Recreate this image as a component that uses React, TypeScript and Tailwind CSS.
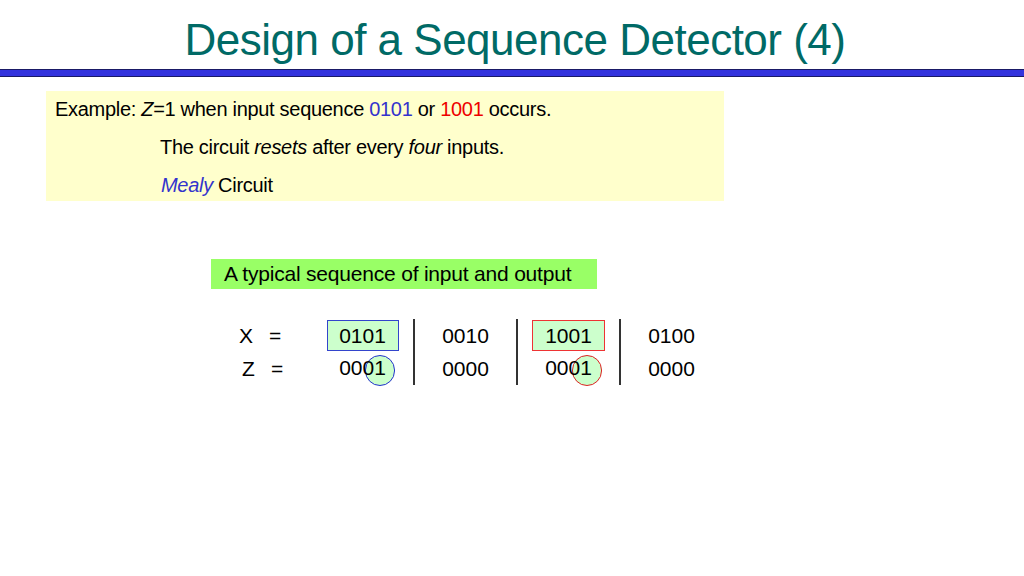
export default function App() {
  const f = { fontFamily: '"Liberation Sans", Arial, sans-serif' };
  const col = "w-[101px] flex flex-col items-center";
  return (
    <div style={f} className="w-[1024px] h-[576px] bg-white relative overflow-hidden text-black">
      <div className="h-[69px] flex items-start justify-center pt-[14px]">
        <h1 className="text-[44px] leading-[52px] text-[#006a66] tracking-[-0.5px] ml-[6px]">Design of a Sequence Detector (4)</h1>
      </div>
      <div className="h-[8px] bg-[#3333dd] border-y border-[#1a1a66]" />
      <div className="ml-[46px] mt-[14px] w-[678px] h-[110px] bg-[#ffffcc] text-[20px] leading-[22px] pt-[7px] pl-[9px] tracking-[-0.3px]">
        <div>Example: <i>Z</i>=1 when input sequence <span className="text-[#3333cc]">0101</span> or <span className="text-[#ee0000]">1001</span> occurs.</div>
        <div className="ml-[105px] mt-[16px]">The circuit <i>resets</i> after every <i>four</i> inputs.</div>
        <div className="ml-[106px] mt-[16px]"><i className="text-[#3333cc]">Mealy</i> Circuit</div>
      </div>
      <div className="ml-[211px] mt-[58px] w-[386px] h-[30px] bg-[#99ff66] text-[21px] leading-[30px] pl-[13px] tracking-[-0.2px]">A typical sequence of input and output</div>
      <div className="ml-[232px] mt-[30px] flex text-[21px]">
        <div className="w-[80px] flex flex-col">
          <div className="h-[33px] flex items-center"><span className="w-[37px] pl-[7px]">X</span><span>=</span></div>
          <div className="h-[33px] flex items-center"><span className="w-[39px] pl-[10px]">Z</span><span>=</span></div>
        </div>
        <div className={col + " relative"}>
          <div className="h-[31px] mt-[1px] w-[72px] border border-[#3344cc] bg-[#ccffcc] flex items-center justify-center">0101</div>
          <div className="absolute left-[53px] top-[36px] w-[30px] h-[31px] rounded-full border border-[#2233cc] bg-[#ccffcc]" />
          <div className="h-[33px] flex items-center relative">0001</div>
        </div>
        <div className="w-[2px] h-[66px] bg-[#333]" />
        <div className={col}>
          <div className="h-[33px] flex items-center">0010</div>
          <div className="h-[33px] flex items-center">0000</div>
        </div>
        <div className="w-[2px] h-[66px] bg-[#333]" />
        <div className={col + " relative"}>
          <div className="h-[31px] mt-[1px] w-[73px] border border-[#ee3333] bg-[#ccffcc] flex items-center justify-center">1001</div>
          <div className="absolute left-[54px] top-[36px] w-[30px] h-[31px] rounded-full border border-[#dd2222] bg-[#ccffcc]" />
          <div className="h-[33px] flex items-center relative">0001</div>
        </div>
        <div className="w-[2px] h-[66px] bg-[#333]" />
        <div className={col}>
          <div className="h-[33px] flex items-center">0100</div>
          <div className="h-[33px] flex items-center">0000</div>
        </div>
      </div>
    </div>
  );
}
